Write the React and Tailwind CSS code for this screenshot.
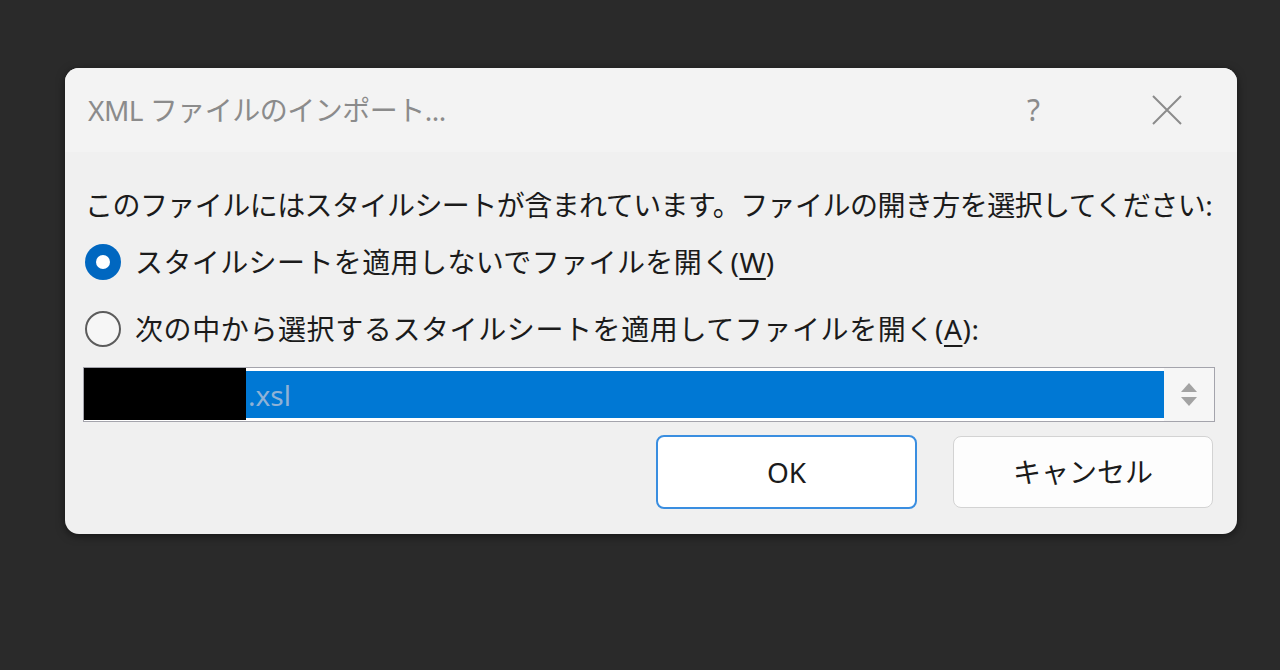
export default function App() {
  const font = { fontFamily: '"Noto Sans", "Noto Sans CJK JP", sans-serif' };
  return (
    <div className="h-[670px] w-[1280px] bg-[#2a2a2a] pt-[68px] pl-[65px]" style={font}>
      <div className="flex h-[466px] w-[1172px] flex-col overflow-hidden rounded-[14px] bg-[#f0f0f0] shadow-[0_2px_8px_rgba(0,0,0,0.5)]">
        {/* title bar */}
        <div className="flex h-[84px] items-center bg-[#f3f3f3] pl-[23px]">
          <span className="text-[28px] leading-none text-[#8b8b8b] tracking-[-0.5px]">XML ファイルのインポート...</span>
          <span className="ml-auto mr-[111px] text-[30px] leading-none text-[#8b8b8b]">?</span>
          <svg width="32" height="32" viewBox="0 0 32 32" className="mr-[54px]">
            <path d="M2 2 L30 30 M30 2 L2 30" stroke="#8b8b8b" strokeWidth="2" fill="none" />
          </svg>
        </div>

        {/* body */}
        <div className="flex flex-col pl-[20px] pr-[22px] text-[#1b1b1b]">
          <div className="mt-[34px] h-[38px] text-[28px] leading-[38px] tracking-[-0.55px] whitespace-nowrap">
            このファイルにはスタイルシートが含まれています。ファイルの開き方を選択してください:
          </div>

          <div className="mt-[19px] flex h-[38px] items-center">
            <span className="flex h-[36px] w-[36px] items-center justify-center rounded-full bg-[#0067c0]">
              <span className="h-[14px] w-[14px] rounded-full bg-white" />
            </span>
            <span className="ml-[14px] text-[28px] leading-none whitespace-nowrap tracking-[0.4px]">
              スタイルシートを適用しないでファイルを開く(<span className="underline underline-offset-[5px]">W</span>)
            </span>
          </div>

          <div className="mt-[29px] flex h-[38px] items-center">
            <span className="h-[36px] w-[36px] rounded-full border-2 border-[#5c5c5c] bg-[#f6f6f6]" />
            <span className="ml-[14px] text-[28px] leading-none whitespace-nowrap tracking-[0.6px]">
              次の中から選択するスタイルシートを適用してファイルを開く(<span className="underline underline-offset-[5px]">A</span>):
            </span>
          </div>

          {/* stylesheet picker */}
          <div className="mt-[19px] flex h-[55px] w-[1132px] -ml-[2px] border border-[#a4a4ac] bg-white">
            <div className="m-[3px] mr-0 flex flex-1 items-center bg-[#0078d4]">
              <span className="h-[52px] w-[162px] -ml-[3px] -my-[3px] self-stretch bg-black" />
              <span className="ml-[2px] text-[28px] leading-none text-[#8fb2d6]">.xsl</span>
            </div>
            <div className="flex w-[50px] flex-col items-center justify-center gap-[5px] bg-[#f6f6f6]">
              <svg width="16" height="9" viewBox="0 0 16 9"><path d="M8 0 L16 9 L0 9 Z" fill="#a3a3a3" /></svg>
              <svg width="16" height="9" viewBox="0 0 16 9"><path d="M0 0 L16 0 L8 9 Z" fill="#a3a3a3" /></svg>
            </div>
          </div>

          {/* buttons */}
          <div className="mt-[13px] mr-[2px] flex justify-end gap-[36px]">
            <button className="flex h-[74px] w-[261px] items-center justify-center rounded-[8px] border-2 border-[#3a8ee0] bg-white text-[28px] text-[#1b1b1b]">
              OK
            </button>
            <button className="mt-[1px] flex h-[72px] w-[260px] items-center justify-center rounded-[8px] border border-[#d3d3d3] bg-[#fdfdfd] text-[28px] text-[#1b1b1b]">
              キャンセル
            </button>
          </div>
        </div>
      </div>
    </div>
  );
}
